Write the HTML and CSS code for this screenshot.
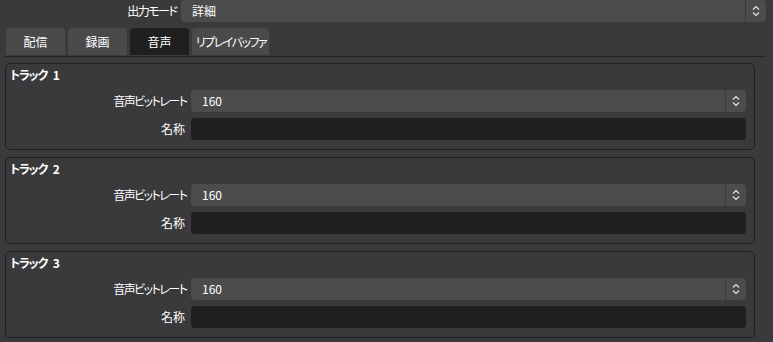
FILE: index.html
```html
<!DOCTYPE html>
<html lang="ja">
<head>
<meta charset="UTF-8">
<meta name="viewport" content="width=device-width, initial-scale=1.0">
<title>出力設定</title>
<link rel="stylesheet" href="styles.css">
</head>
<body>
<div class="mode-row">
  <label class="field-label kana">出力モード</label>
  <div class="combo">
    <span class="combo-text">詳細</span>
    <span class="combo-arrow"><svg width="10" height="14" viewBox="0 0 10 14"><polyline points="2,5.5 5,2.5 8,5.5"/><polyline points="2,8.5 5,11.5 8,8.5"/></svg></span>
  </div>
</div>

<div class="tabs">
  <div class="tab">配信</div>
  <div class="tab">録画</div>
  <div class="tab active">音声</div>
  <div class="tab wide kana">リプレイバッファ</div>
</div>

<div class="pane">
  <!-- one group per audio track -->
  <div class="group">
    <div class="group-title">トラック 1</div>
    <div class="form-row">
      <label class="field-label kana">音声ビットレート</label>
      <div class="combo">
        <span class="combo-text">160</span>
        <span class="combo-arrow"><svg width="10" height="14" viewBox="0 0 10 14"><polyline points="2,5.5 5,2.5 8,5.5"/><polyline points="2,8.5 5,11.5 8,8.5"/></svg></span>
      </div>
    </div>
    <div class="form-row">
      <label class="field-label">名称</label>
      <input type="text" class="text-input">
    </div>
  </div>

  <div class="group">
    <div class="group-title">トラック 2</div>
    <div class="form-row">
      <label class="field-label kana">音声ビットレート</label>
      <div class="combo">
        <span class="combo-text">160</span>
        <span class="combo-arrow"><svg width="10" height="14" viewBox="0 0 10 14"><polyline points="2,5.5 5,2.5 8,5.5"/><polyline points="2,8.5 5,11.5 8,8.5"/></svg></span>
      </div>
    </div>
    <div class="form-row">
      <label class="field-label">名称</label>
      <input type="text" class="text-input">
    </div>
  </div>

  <div class="group">
    <div class="group-title">トラック 3</div>
    <div class="form-row">
      <label class="field-label kana">音声ビットレート</label>
      <div class="combo">
        <span class="combo-text">160</span>
        <span class="combo-arrow"><svg width="10" height="14" viewBox="0 0 10 14"><polyline points="2,5.5 5,2.5 8,5.5"/><polyline points="2,8.5 5,11.5 8,8.5"/></svg></span>
      </div>
    </div>
    <div class="form-row">
      <label class="field-label">名称</label>
      <input type="text" class="text-input">
    </div>
  </div>
</div>
</body>
</html>
```

FILE: styles.css
```css
body {
  margin: 0;
  background-color: #3a393c;
  color: #ffffff;
  font-family: 'Noto Sans CJK JP', 'Noto Sans', sans-serif;
  font-size: 12px;
  font-feature-settings: "palt";
  width: 773px;
  height: 342px;
  overflow: hidden;
}

.mode-row {
  display: grid;
  grid-template-columns: 175px 1fr;
  column-gap: 6px;
  padding-right: 7px;
  height: 22px;
}

.field-label {
  text-align: right;
  line-height: 22px;
  white-space: nowrap;
}

/* katakana is narrower in the original UI font */
.kana {
  letter-spacing: -1.5px;
}

.field-label.kana {
  margin-right: -1.5px;
}

.combo {
  display: flex;
  height: 22px;
  background-color: #4c4c4c;
  border-radius: 4px;
}

.combo-text {
  flex: 1;
  padding-left: 11px;
  line-height: 22px;
}

.combo-arrow {
  width: 20px;
  border-left: 1px solid #3a393c;
  display: flex;
  align-items: center;
  justify-content: center;
}

.combo-arrow svg {
  fill: none;
  stroke: #e8e8e8;
  stroke-width: 1.1;
}

.tabs {
  display: flex;
  gap: 3px;
  margin-top: 6px;
  padding-left: 6px;
}

.tab {
  width: 59px;
  height: 27px;
  line-height: 27px;
  text-align: center;
  white-space: nowrap;
  background-color: #4a4a4b;
  border-radius: 4px 4px 0 0;
}

.tab.active {
  background-color: #1f1f1f;
}

.tab.wide {
  width: 77px;
  text-indent: 1px;
}

.pane {
  margin: 1px 7px 0 5px;
  border-top: 1px solid #222124;
  padding-top: 6px;
  padding-right: 11px;
  display: flex;
  flex-direction: column;
  gap: 7px;
}

.group {
  border: 1px solid #1f1e21;
  border-radius: 5px;
  padding: 3px 8px 9px 4px;
}

.group-title {
  font-weight: bold;
  line-height: 16px;
  margin-bottom: 7px;
  letter-spacing: -1.2px;
  word-spacing: 4px;
}

.form-row {
  display: grid;
  grid-template-columns: 175px 1fr;
  column-gap: 6px;
}

.form-row + .form-row {
  margin-top: 6px;
}

.text-input {
  height: 22px;
  box-sizing: border-box;
  border: none;
  border-radius: 4px;
  background-color: #1f1f1f;
  color: #ffffff;
  outline: none;
  margin: 0;
}
```
